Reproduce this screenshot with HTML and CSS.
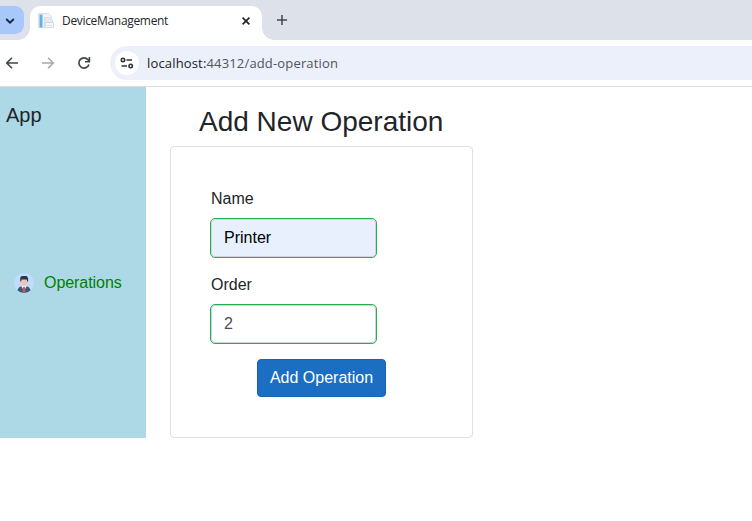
FILE: index.html
```html
<!DOCTYPE html>
<html lang="en">
<head>
<meta charset="utf-8">
<title>DeviceManagement</title>
<link rel="stylesheet" href="styles.css">
</head>
<body>
<header class="browser">
  <div class="tabstrip">
    <div class="tab-search"><svg width="10" height="8" viewBox="0 0 10 8"><path d="M1.2 2l3.8 3.7L8.8 2" fill="none" stroke="#1b2740" stroke-width="1.9"/></svg></div>
    <div class="tab">
      <svg class="favicon" width="17" height="16" viewBox="0 0 17 16">
        <path d="M.5.5h10l3 3v11H.5z" fill="#f0f3f5" stroke="#dce2e6"/>
        <path d="M1.5 1.5h3v13h-3z" fill="#63b3de"/>
        <path d="M6.5 4.5h5l3 3v7h-8z" fill="#e7ebee" stroke="#d9dfe3"/>
        <path d="M7.5 9.5h8v5h-8z" fill="#f8fafb" stroke="#d3dade"/>
        <path d="M9 12.5h5" stroke="#d6dce0"/>
      </svg>
      <span class="tab-title">DeviceManagement</span>
      <svg class="close" width="8" height="8" viewBox="0 0 8 8"><path d="M.6.6l6.8 6.8M7.4.6L.6 7.4" stroke="#202226" stroke-width="1.6"/></svg>
    </div>
    <svg class="plus" width="12" height="12" viewBox="0 0 12 12"><path d="M6 1v10M1 6h10" stroke="#44474c" stroke-width="1.5"/></svg>
  </div>
  <div class="toolbar">
    <svg class="nav" width="14" height="14" viewBox="0 0 14 14"><path d="M13 7H2M7 1.7L1.7 7 7 12.3" fill="none" stroke="#43474b" stroke-width="1.6"/></svg>
    <svg class="nav" width="14" height="14" viewBox="0 0 14 14"><path d="M1 7h11M7 1.7L12.3 7 7 12.3" fill="none" stroke="#a6a8aa" stroke-width="1.5"/></svg>
    <svg class="nav" width="14" height="14" viewBox="0 0 14 14"><path d="M11.9 8.4A5.1 5.1 0 1 1 11 3.7L12.4 5.2" fill="none" stroke="#43474b" stroke-width="1.7"/><path d="M12.4 1v4.8H8" fill="none" stroke="#43474b" stroke-width="1.6"/></svg>
    <div class="address">
      <span class="site-info"><svg width="14" height="12" viewBox="0 0 14 12"><g fill="none" stroke="#303338" stroke-width="1.6"><circle cx="3" cy="3" r="1.7"/><path d="M6.5 3H12M1.5 9H7"/><circle cx="10.7" cy="9" r="1.7"/></g></svg></span>
      <span class="url"><span class="host">localhost:</span>44312/add-operation</span>
    </div>
  </div>
</header>
<div class="page">
  <nav class="sidebar">
    <div class="brand">App</div>
    <a class="nav-link">
      <svg width="20" height="20" viewBox="0 0 20 20">
        <circle cx="10" cy="10" r="10" fill="#c3dbff"/>
        <path d="M3.5 17.6Q4 14 7.5 13.2h5q3.5.8 4 4.4A10 10 0 0 1 3.5 17.6z" fill="#385a75"/>
        <path d="M7.5 12h5v1.6L10 18l-2.5-4.4z" fill="#e7edf3"/>
        <path d="M9.2 14h1.6l.8 5.8H8.4z" fill="#c95762"/>
        <path d="M6.7 5.5h6.6v4Q13 13 10 13.1 7 13 6.7 9.5z" fill="#efc5b3"/>
        <path d="M6.2 8.5V4.8L7.6 3h5.2l1.3 2.2v3.3h-.9l-.5-2.1H7.6L7 8.5z" fill="#29384a"/>
      </svg>
      <span>Operations</span>
    </a>
  </nav>
  <main class="content">
    <h2>Add New Operation</h2>
    <form class="card">
      <label for="name">Name</label>
      <input class="filled" id="name" type="text" value="Printer">
      <label for="order">Order</label>
      <input id="order" type="text" value="2">
      <button type="button">Add Operation</button>
    </form>
  </main>
</div>
</body>
</html>
```
FILE: styles.css
```css
* { box-sizing: border-box; }
body { margin: 0; background: #fff; color: #212529; font: 16px/24px "Liberation Sans", Arial, sans-serif; overflow: hidden; }
svg { display: block; flex: none; }
.browser { height: 87px; border-bottom: 1px solid #dfdfdf; font-family: "Open Sans", "Noto Sans", sans-serif; }
.tabstrip { display: flex; height: 40px; background: #dde1e9; }
.tab-search { width: 24px; height: 28px; margin-top: 6px; padding: 11px 0 0 5px; border-radius: 0 9px 9px 0; background: #a8c7fa; }
.tab { position: relative; display: flex; align-items: center; width: 232px; height: 34px; margin: 6px 0 0 6px; padding: 0 12px 5px 8px; border-radius: 10px 10px 0 0; background: #fff; }
.tab::before, .tab::after { content: ""; position: absolute; bottom: 0; width: 12px; height: 12px; }
.tab::before { right: 100%; background: radial-gradient(circle at 0 0, transparent 11.5px, #fff 12px); }
.tab::after { left: 100%; background: radial-gradient(circle at 100% 0, transparent 11.5px, #fff 12px); }
.tab-title { margin-left: 7px; color: #25272b; font-size: 12px; line-height: 18px; letter-spacing: -0.32px; }
.close { margin-left: auto; }
.plus { margin: 14px 0 0 14px; }
.toolbar { display: flex; align-items: center; height: 46px; padding-left: 5px; }
.nav { margin-right: 22px; }
.address { display: flex; align-items: center; flex: 1; height: 34px; margin-left: -3px; padding-left: 5px; border-radius: 17px 0 0 17px; background: #ecf0fa; }
.site-info { display: flex; align-items: center; justify-content: center; width: 24px; height: 24px; border-radius: 50%; background: #fff; }
.url { margin-left: 8px; color: #50545a; font-size: 13px; line-height: 20px; letter-spacing: 0.16px; }
.host { color: #202226; }
.page { display: flex; height: 351px; }
.sidebar { width: 146px; padding: 13px 6px; background: #add8e6; }
.brand { height: 30px; font-size: 20px; line-height: 30px; }
.nav-link { display: flex; align-items: center; gap: 10px; height: 24px; margin: 141px 0 0 8px; color: #008000; letter-spacing: -0.05px; }
.content { width: 303px; margin-left: 24px; }
h2 { height: 34px; margin: 18px 0 7px 29px; font-size: 28px; font-weight: 400; line-height: 34px; white-space: nowrap; }
.card { display: flex; flex-direction: column; height: 292px; padding: 40px 40px 39px; border: 1px solid #dfdfdf; border-radius: 4px; }
label { height: 24px; margin-bottom: 8px; }
input { width: 165px; height: 38px; margin: 0 0 16px; padding: 6px 12px; border: 1px solid #ced4da; border-radius: 4px; outline: 1px solid #26b050; background: #fff; color: #495057; font: inherit; }
.filled { background: #e8f0fe; color: #000; }
button { width: 129px; height: 38px; margin: 0 0 0 46px; padding: 0; border: 1px solid #1861ac; border-radius: 4px; background: #1b6ec2; color: #fff; font: inherit; }
```
